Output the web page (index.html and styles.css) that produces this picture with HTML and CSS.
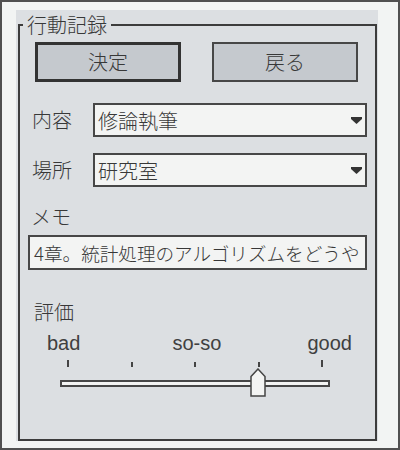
FILE: index.html
```html
<!DOCTYPE html>
<html lang="ja">
<head>
<meta charset="utf-8">
<title>行動記録</title>
<link rel="stylesheet" href="styles.css">
</head>
<body>
<div class="screen">
  <div class="panel">
    <fieldset class="group">
      <legend class="group-title">行動記録</legend>
      <div class="btn-row">
        <button class="btn btn-default">決定</button>
        <button class="btn">戻る</button>
      </div>
      <div class="field-row row-content">
        <span class="field-label">内容</span>
        <div class="combo">
          <span class="combo-text">修論執筆</span>
          <svg class="combo-arrow" viewBox="0 0 11 7"><path d="M0 0H11V2L5.5 7L0 2Z"/></svg>
        </div>
      </div>
      <div class="field-row row-place">
        <span class="field-label">場所</span>
        <div class="combo">
          <span class="combo-text">研究室</span>
          <svg class="combo-arrow" viewBox="0 0 11 7"><path d="M0 0H11V2L5.5 7L0 2Z"/></svg>
        </div>
      </div>
      <div class="memo-label">メモ</div>
      <div class="memo-box">4章。統計処理のアルゴリズムをどうや</div>
      <div class="rating-label">評価</div>
      <div class="scale-labels">
        <span>bad</span>
        <span class="mid-label">so-so</span>
        <span>good</span>
      </div>
      <div class="slider">
        <div class="ticks">
          <i class="tick tick-end"></i>
          <i class="tick"></i>
          <i class="tick"></i>
          <i class="tick"></i>
          <i class="tick tick-end"></i>
        </div>
        <div class="track"></div>
        <svg class="thumb" viewBox="0 0 16 29"><path d="M1 8.5L8 1L15 8.5V28H1Z"/></svg>
      </div>
    </fieldset>
  </div>
</div>
</body>
</html>
```
FILE: styles.css
```css
* { box-sizing: border-box; }
html, body { margin: 0; padding: 0; }
body {
  background: #f2f4f3;
  color: #383838;
  font-family: "Noto Sans CJK JP", "Noto Sans", sans-serif;
  font-weight: 300;
}
.screen {
  width: 400px;
  height: 450px;
  border: 2px solid #505050;
  background: #f2f4f3;
  padding: 8px 0 0 14px;
}
.panel {
  width: 362px;
  height: 431px;
  background: #dcdfe2;
  padding: 0 1px 0 2px;
}
.group {
  margin: 0;
  height: 431px;
  min-width: 0;
  border: 2px solid #3c3c3c;
  padding: 0;
}
.group-title {
  margin-left: 3px;
  padding: 0 4px;
  font-size: 20px;
  line-height: 30px;
}
.btn-row {
  display: flex;
  gap: 31px;
  margin: 2px 0 0 15px;
}
.btn {
  width: 146px;
  height: 40px;
  padding: 0;
  font-family: inherit;
  font-weight: inherit;
  font-size: 20px;
  line-height: 1;
  color: #383838;
  background: #c5c9ce;
  border: 2px solid #474747;
}
.btn-default { border: 3px solid #333; }
.field-row {
  display: flex;
  align-items: center;
  margin-left: 12px;
}
.row-content { margin-top: 21px; }
.row-place { margin-top: 16px; }
.field-label {
  width: 61px;
  font-size: 20px;
  line-height: 24px;
}
.combo {
  width: 274px;
  height: 34px;
  display: flex;
  align-items: center;
  padding: 0 3px 0 3px;
  background: #f3f4f3;
  border: 2px solid #474747;
  font-size: 20px;
}
.combo-text { flex: 1; }
.combo-arrow { width: 11px; height: 7px; fill: #333; }
.memo-label {
  margin: 18px 0 0 11px;
  font-size: 20px;
  line-height: 24px;
}
.memo-box {
  width: 339px;
  height: 35px;
  margin: 6px 0 0 8px;
  padding: 0 0 0 4px;
  background: #f3f4f3;
  border: 2px solid #474747;
  font-size: 18.6px;
  line-height: 31px;
  white-space: nowrap;
  overflow: hidden;
}
.rating-label {
  margin: 30px 0 0 14px;
  font-size: 20px;
  line-height: 24px;
}
.scale-labels {
  width: 305px;
  margin: 7px 0 0 27px;
  display: flex;
  justify-content: space-between;
  font-family: "Liberation Sans", Arial, sans-serif;
  font-weight: 400;
  font-size: 20px;
  line-height: 24px;
  color: #404040;
}
.mid-label { margin-left: 6px; }
.slider {
  position: relative;
  width: 270px;
  height: 42px;
  margin-left: 40px;
  padding-top: 5px;
}
.ticks {
  height: 7px;
  display: flex;
  justify-content: space-between;
  align-items: flex-end;
  padding: 0 7px;
}
.tick { width: 2px; height: 5px; background: #444; }
.tick-end { height: 7px; }
.track {
  height: 7px;
  margin-top: 13px;
  background: #f3f4f3;
  border: 2px solid #474747;
}
.thumb {
  position: absolute;
  left: 190px;
  top: 13px;
  width: 16px;
  height: 29px;
  fill: #f3f4f3;
  stroke: #444;
  stroke-width: 1.5;
}
```
